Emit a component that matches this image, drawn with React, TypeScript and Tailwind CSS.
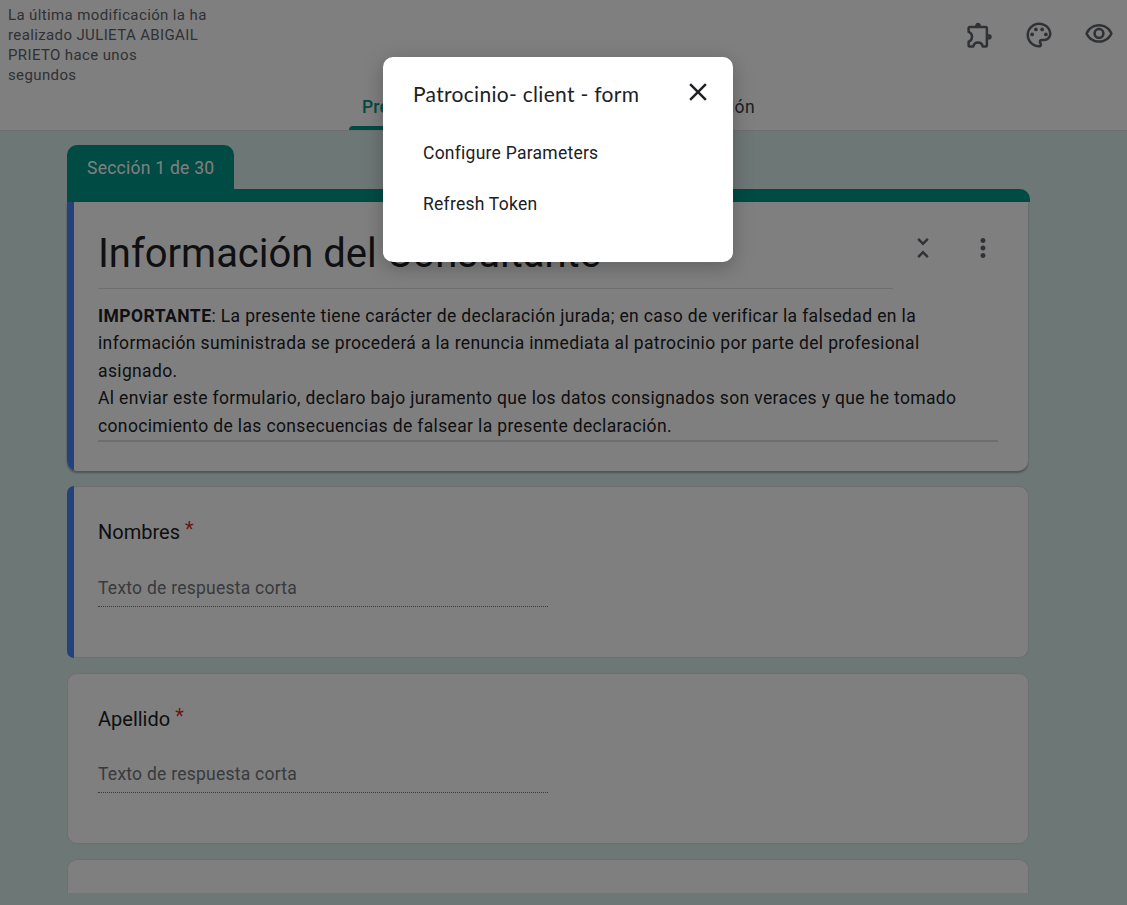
import React from "react";
import { MdOutlinePalette, MdOutlineVisibility, MdMoreVert, MdUnfoldLess, MdClose } from "react-icons/md";

function PuzzleIcon() {
  return (
    <svg viewBox="0 0 24 24" className="size-[30px]" fill="none" stroke="currentColor" strokeWidth="2" strokeLinejoin="round">
      <path d="M4.700 5.600h12.600a1 1 0 0 1 1 1v13.600a1 1 0 0 1-1 1h-2.300c-.4-1.900-1.900-3.200-3.800-3.200s-3.400 1.300-3.800 3.200H4.700a1 1 0 0 1-1-1v-2.900c1.600-.5 2.700-2 2.700-3.900s-1.100-3.400-2.700-3.900V6.600a1 1 0 0 1 1-1z" />
      <path d="M8.900 5a2.300 2.900 0 0 1 4.600 0zM19.300 11.100a2.900 2.300 0 0 1 0 4.600z" fill="currentColor" stroke="none" />
    </svg>
  );
}

function Header() {
  return (
    <header className="flex h-[131px] flex-col justify-between border-b border-[#dadce0] bg-white">
      <div className="flex items-start justify-between">
        <p className="w-[208px] pl-2 pt-[5px] text-[15px] leading-5 tracking-[0.375px] text-[#5f6368]">
          La última modificación la ha realizado JULIETA ABIGAIL PRIETO hace unos segundos
        </p>
        <div className="flex gap-[30px] pr-[13px] pt-5 text-[#5f6368]">
          <PuzzleIcon />
          <MdOutlinePalette className="size-[30px]" />
          <MdOutlineVisibility className="-mt-px size-[30px]" />
        </div>
      </div>
      <nav className="-mt-[60px] ml-[349px] flex w-[419px] justify-between text-[17.5px] tracking-[0.2px]">
        <div className="flex flex-col">
          <span className="px-[13px] leading-5 font-medium text-[#009688]">Preguntas</span>
          <span className="mt-[9px] h-1 rounded-t bg-[#009688]" />
        </div>
        <span className="leading-5 text-[#3c4043]">Respuestas</span>
        <span className="pr-[13px] leading-5 tracking-[0.4px] text-[#3c4043]">Configuración</span>
      </nav>
    </header>
  );
}

function Question({ label, active = false }: { label: string; active?: boolean }) {
  return (
    <section
      className={
        active
          ? "mt-[14px] flex h-[172px] rounded-[10px] border border-l-0 border-[#dadce0] bg-white"
          : "mt-[15px] flex h-[171px] rounded-[10px] border border-[#dadce0] bg-white"
      }
    >
      {active ? <span className="-my-px w-[7px] rounded-l-[7px] bg-[#4285f4]" /> : <span className="w-[6px]" />}
      <div className="flex flex-col pl-6">
        <h2 className="mt-[30px] flex items-start text-[20px] leading-[30px] text-[#202124]">
          {label}
          <span className="-mt-[3px] pl-[5px] text-[#d93025]">*</span>
        </h2>
        <p className={`${active ? "mt-[26px]" : "mt-[25px]"} h-[34px] w-[450px] border-b border-dotted border-[#70757a] text-[17.5px] leading-[31px] tracking-[0.25px] text-[#70757a]`}>
          Texto de respuesta corta
        </p>
      </div>
    </section>
  );
}

function SectionCard() {
  return (
    <section>
      <div className="h-11 w-[167px] rounded-t-[10px] bg-[#009688] pl-5 text-[17.5px] leading-[47px] tracking-[0.25px] text-white">
        Sección 1 de 30
      </div>
      <div className="h-[13px] w-[963px] rounded-tr-[10px] bg-[#009688]" />
      <div className="flex h-[269px] w-[961px] overflow-hidden rounded-b-[10px] bg-white shadow-[0_2px_2px_rgba(0,0,0,0.3)]">
        <span className="w-[7px] bg-[#4285f4]" />
        <div className="box-content w-[900px] pl-6">
          <div className="flex h-[87px] justify-between">
            <h1 className="w-[795px] border-b border-[#dadce0] pt-[27px] text-[40px] leading-[50px] tracking-[-0.03px] text-[#202124]">
              Información del Consultante
            </h1>
            <div className="flex gap-[30px] pt-[31px] text-[#5f6368]">
              <MdUnfoldLess className="size-[30px]" />
              <MdMoreVert className="size-[30px]" />
            </div>
          </div>
          <div className="mt-[13px] h-[140px] border-b-2 border-[#dadce0] pt-[0.5px] text-[17.5px] leading-[27.5px] tracking-[0.36px] whitespace-nowrap text-[#202124]">
            <p><b className="tracking-[0.45px]">IMPORTANTE</b>: La presente tiene carácter de declaración jurada; en caso de verificar la falsedad en la<br />información suministrada se procederá a la renuncia inmediata al patrocinio por parte del profesional<br />asignado.</p>
            <p>Al enviar este formulario, declaro bajo juramento que los datos consignados son veraces y que he tomado<br />conocimiento de las consecuencias de falsear la presente declaración.</p>
          </div>
        </div>
      </div>
    </section>
  );
}

function AddonDialog() {
  return (
    <div role="dialog" className="absolute left-[383px] top-[57px] h-[205px] w-[350px] rounded-[10px] bg-white shadow-[0_5px_20px_rgba(0,0,0,0.25)]">
      <div className="flex h-[50px] items-start justify-between pl-[30px] pr-5 pt-5">
        <h2 className="font-['Lato',sans-serif] text-[21px] leading-[34px] tracking-[0.3px] text-[#202124]">Patrocinio- client - form</h2>
        <MdClose className="size-[30px] text-[#202124]" />
      </div>
      <ul className="pl-10 pt-[21px] text-[17.5px] leading-[51px] tracking-[0.25px] text-[#202124]">
        <li>Configure Parameters</li>
        <li>Refresh Token</li>
      </ul>
    </div>
  );
}

export default function App() {
  return (
    <div className="relative h-[905px] w-[1127px] overflow-hidden bg-[#dbeeeb] font-['Roboto',sans-serif]">
      <Header />
      <main className="ml-[67px] h-[762px] w-[962px] pt-[14px]">
        <SectionCard />
        <div className="h-px" />
        <Question label="Nombres" active />
        <Question label="Apellido" />
        <div className="mt-[15px] h-[34px] rounded-t-[10px] border border-b-0 border-[#dadce0] bg-white" />
      </main>
      <div className="absolute inset-0 bg-black/50" />
      <AddonDialog />
    </div>
  );
}
